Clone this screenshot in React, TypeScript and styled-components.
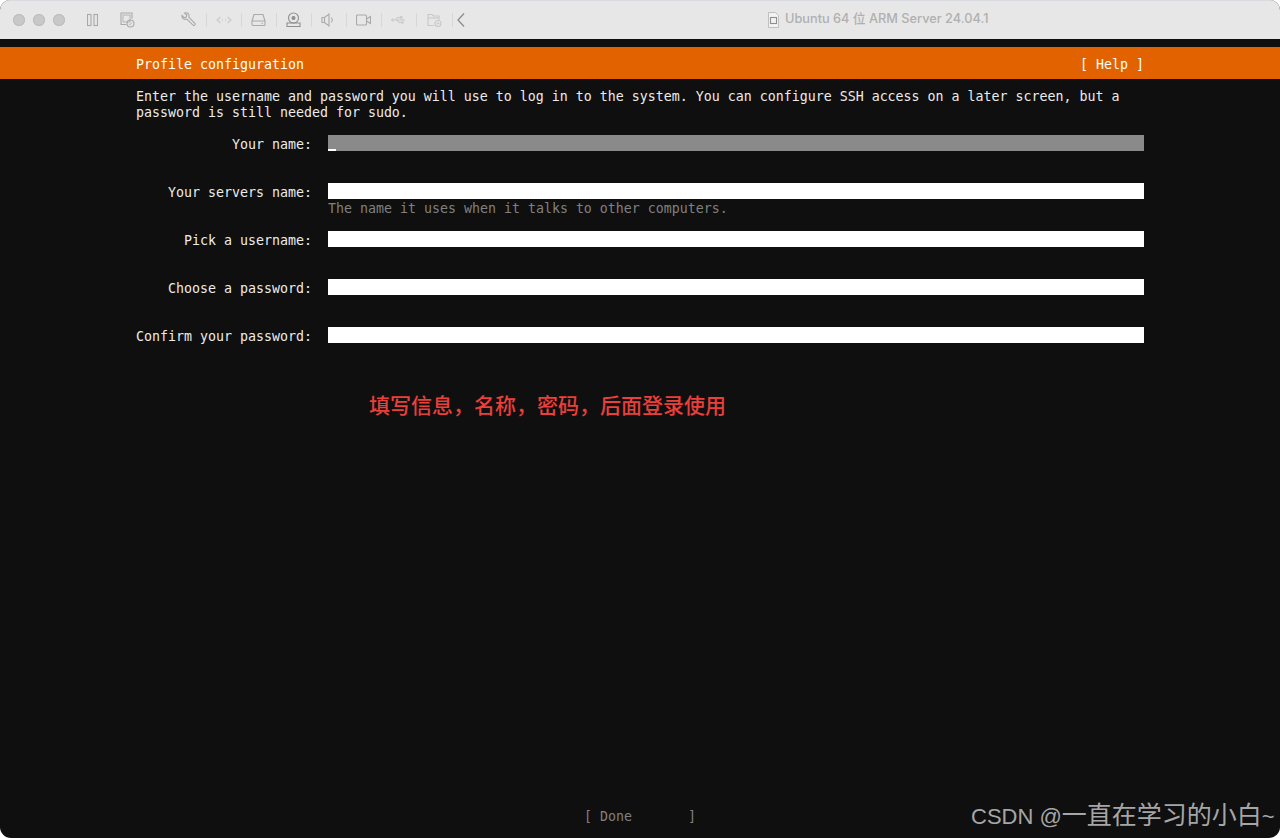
import React from "react";
import styled, { createGlobalStyle } from "styled-components";

const Global = createGlobalStyle`
  html, body { margin: 0; padding: 0; background: #ffffff; height: 100%; }
  #root { height: 100%; }
`;

const Window = styled.div`
  position: relative;
  width: 1280px;
  height: 838px;
  display: flex;
  flex-direction: column;
  border-radius: 10px 10px 11px 11px;
  overflow: hidden;
  background: #0f0f0f;
`;

const TitleBar = styled.header`
  position: relative;
  height: 39px;
  flex: none;
  display: flex;
  align-items: center;
  background: #e7e7e7;
  border-top: 1px solid #d8dbe0;
  box-sizing: border-box;
`;

const Lights = styled.div`
  display: flex;
  gap: 8px;
  margin-left: 13px;
`;

const Light = styled.span`
  width: 12px;
  height: 12px;
  border-radius: 50%;
  background: #c8c8c8;
  box-shadow: inset 0 0 0 1px #bcbcbc;
`;

const ToolIcon = styled.svg<{ $dim?: boolean; $left: number; $w: number }>`
  flex: none;
  margin-left: ${(p) => p.$left}px;
  width: ${(p) => p.$w}px;
  height: 16px;
  fill: none;
  stroke: ${(p) => (p.$dim ? "#c9c9c9" : "#a9a9a9")};
  stroke-width: 1.1;
`;

const Sep = styled.span<{ $left: number }>`
  flex: none;
  width: 1px;
  height: 14px;
  margin-left: ${(p) => p.$left}px;
  background: #d7d7d7;
`;

const WindowTitle = styled.div`
  position: absolute;
  left: 768px;
  top: 10px;
  display: flex;
  align-items: center;
  gap: 6px;
  height: 18px;
`;

const TitleText = styled.span`
  font: 500 12.75px/18px "Inter", "Noto Sans CJK SC", sans-serif;
  color: #b0b0b0;
  white-space: nowrap;
  margin-top: -2px;
`;

const Screen = styled.main`
  flex: 1;
  display: flex;
  flex-direction: column;
  padding-top: 8px;
  min-height: 0;
  font: 13.29px/16px "DejaVu Sans Mono", monospace;
  color: #ececec;
  white-space: pre;
`;

const Banner = styled.div`
  height: 32px;
  flex: none;
  background: #e36200;
  padding: 3px 136px 0;
  box-sizing: border-box;
  display: flex;
  align-items: center;
  justify-content: space-between;
  color: #ffffff;
`;

const Intro = styled.p`
  margin: 10px 0 14px 136px;
`;

const Form = styled.div`
  display: flex;
  flex-direction: column;
  margin-left: 136px;
  width: 1008px;
`;

const Row = styled.div`
  display: grid;
  grid-template-columns: 176px 816px;
  column-gap: 16px;
  height: 48px;
`;

const Label = styled.label`
  text-align: right;
  padding-top: 1px;
  line-height: 18px;
`;

const Field = styled.div<{ $focus?: boolean }>`
  position: relative;
  height: 16px;
  background: ${(p) => (p.$focus ? "#8a8a8a" : "#ffffff")};
`;

const Caret = styled.span`
  position: absolute;
  left: 0;
  bottom: 0;
  width: 8px;
  height: 2px;
  background: #ffffff;
`;

const Hint = styled.div`
  color: #808080;
  padding-top: 1px;
  line-height: 18px;
`;

const Note = styled.div`
  position: absolute;
  left: 369px;
  top: 391px;
  font: 500 21px/26px "Noto Sans CJK SC", sans-serif;
  color: #ea3f3a;
  white-space: nowrap;
`;

const Footer = styled.div`
  margin-top: auto;
  height: 29px;
  flex: none;
  display: flex;
  justify-content: center;
  color: #808080;
  box-sizing: border-box;
`;

const Watermark = styled.div`
  position: absolute;
  left: 971px;
  top: 799px;
  font: 400 22px/32px "Liberation Sans", "Noto Sans CJK SC", sans-serif;
  color: #a6a6a6;
  white-space: nowrap;
`;

const WatermarkCjk = styled.span`
  font-size: 25px;
`;

const fields = [
  { label: "Your name:", focus: true },
  { label: "Your servers name:", hint: "The name it uses when it talks to other computers." },
  { label: "Pick a username:" },
  { label: "Choose a password:" },
  { label: "Confirm your password:" },
];

export default function App() {
  return (
    <Window>
      <Global />
      <TitleBar>
        <Lights>
          <Light />
          <Light />
          <Light />
        </Lights>
        <ToolIcon $left={22} $w={11} viewBox="0 0 11 16">
          <rect x="0.5" y="2.5" width="3.5" height="11" />
          <rect x="7" y="2.5" width="3.5" height="11" />
        </ToolIcon>
        <ToolIcon $left={22} $w={15} viewBox="0 0 15 16">
          <path d="M6.5 12.5H1V1h11v5.5" />
          <rect x="3" y="3" width="7" height="7" strokeWidth="0.8" />
          <circle cx="10.5" cy="11.5" r="3.5" />
          <path d="M9 12l1.2.6L12 10.5" strokeWidth="0.8" />
        </ToolIcon>
        <ToolIcon $left={46} $w={15} viewBox="0 0 15 16">
          <path d="M1 3.5L3.3 5.7 5.3 5 5.8 3 3.6 1.1C5.6.3 7.7 1 8 3.2c.1.8 0 1.4-.2 2l6.1 6.2c.9 1-.8 2.8-1.9 1.8L5.900 7.100c-2.400.9-5.400-.5-4.900-3.600z" />
        </ToolIcon>
        <Sep $left={10} />
        <ToolIcon $left={9} $w={16} viewBox="0 0 16 16" $dim>
          <path d="M4.500 5L1 8l3.500 3M11.500 5L15 8l-3.500 3" />
          <path d="M6 8h.8M9.200 8h.8" strokeWidth="1.300" />
        </ToolIcon>
        <Sep $left={9} />
        <ToolIcon $left={9} $w={15} viewBox="0 0 15 16">
          <path d="M1 9l2-6.500h9L14 9M1 9h13v3.500a1 1 0 0 1-1 1H2a1 1 0 0 1-1-1z" />
          <path d="M10.500 11.300h1.500" />
        </ToolIcon>
        <Sep $left={10} />
        <ToolIcon $left={9} $w={15} viewBox="0 0 15 16" style={{ stroke: "#8f8f8f" }}>
          <circle cx="7.500" cy="6" r="5" />
          <circle cx="7.500" cy="6" r="1.500" fill="#8f8f8f" />
          <path d="M1 11v3.500h13V11z" />
        </ToolIcon>
        <Sep $left={10} />
        <ToolIcon $left={9} $w={14} viewBox="0 0 14 16">
          <path d="M1 5.500h2.500L8 2v12l-4.500-3.500H1z" />
          <path d="M3.500 5.500v5" />
          <path d="M10.500 5.500c1 1.500 1 3.500 0 5" />
        </ToolIcon>
        <Sep $left={11} />
        <ToolIcon $left={9} $w={15} viewBox="0 0 15 16">
          <rect x="0.500" y="3" width="10" height="10" rx="1" />
          <path d="M10.500 7l4-2.500v7l-4-2.500" />
        </ToolIcon>
        <Sep $left={10} />
        <ToolIcon $left={9} $w={15} viewBox="0 0 15 16" $dim>
          <path d="M2.500 8H14" />
          <path d="M2.500 6.500L.5 8l2 1.500" />
          <path d="M4.500 8l2-2.500h3M6 8l2 2.500h2.500" />
          <rect x="9.500" y="4.700" width="1.500" height="1.500" />
          <circle cx="11.500" cy="10.500" r="0.800" />
        </ToolIcon>
        <Sep $left={10} />
        <ToolIcon $left={10} $w={15} viewBox="0 0 15 16" $dim>
          <path d="M7 13.500H1V2.500h4l1.500 1.500H12V8" />
          <path d="M1 6h11" />
          <circle cx="11" cy="11.500" r="3" />
          <path d="M11 10v3M9.500 11.500h3" strokeWidth="0.800" />
        </ToolIcon>
        <Sep $left={10} />
        <ToolIcon $left={4} $w={8} viewBox="0 0 8 16" style={{ stroke: "#8c8c8c", strokeWidth: 1.3 }}>
          <path d="M7 1.500L1 8l6 6.500" />
        </ToolIcon>
        <WindowTitle>
          <svg width="11" height="16" viewBox="0 0 11 16" fill="none" stroke="#b5b5b5" strokeWidth="0.8">
            <path d="M.5.500h7l3 3v12H.5z" fill="#f2f2f2" />
            <rect x="2.500" y="5.500" width="6" height="6" stroke="#8f8f8f" strokeWidth="1.100" />
          </svg>
          <TitleText>Ubuntu 64 位 ARM Server 24.04.1</TitleText>
        </WindowTitle>
      </TitleBar>
      <Screen>
        <Banner>
          <span>Profile configuration</span>
          <span>[ Help ]</span>
        </Banner>
        <Intro>
          {"Enter the username and password you will use to log in to the system. You can configure SSH access on a later screen, but a\npassword is still needed for sudo."}
        </Intro>
        <Form>
          {fields.map((f) => (
            <Row key={f.label}>
              <Label>{f.label}</Label>
              <div>
                <Field $focus={f.focus}>{f.focus && <Caret />}</Field>
                {f.hint && <Hint>{f.hint}</Hint>}
              </div>
            </Row>
          ))}
        </Form>
        <Footer>{"[ Done       ]"}</Footer>
      </Screen>
      <Note>填写信息，名称，密码，后面登录使用</Note>
      <Watermark>
        CSDN @<WatermarkCjk>一直在学习的小白</WatermarkCjk>~
      </Watermark>
    </Window>
  );
}
